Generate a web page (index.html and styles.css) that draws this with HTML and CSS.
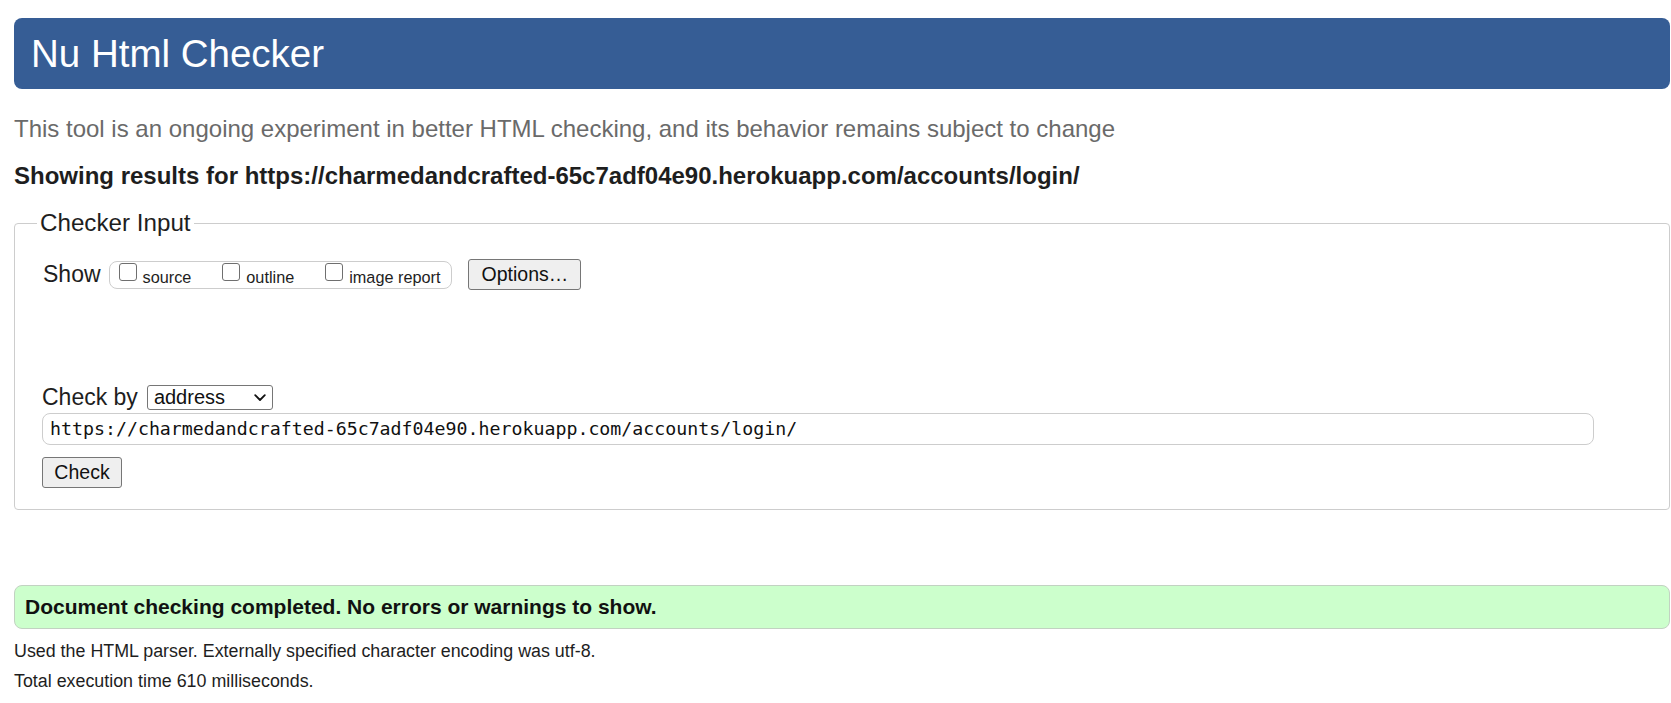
FILE: index.html
```html
<!DOCTYPE html>
<html lang="en">
<head>
<meta charset="utf-8">
<title>Nu Html Checker</title>
<link rel="stylesheet" href="styles.css">
</head>
<body>
<div class="page">
  <header class="banner"><h1 class="banner-title">Nu Html Checker</h1></header>
  <p class="tagline">This tool is an ongoing experiment in better HTML checking, and its behavior remains subject to change</p>
  <p class="results">Showing results for https://charmedandcrafted-65c7adf04e90.herokuapp.com/accounts/login/</p>
  <fieldset class="input">
    <legend class="input-legend">Checker Input</legend>
    <div class="show-row">
      <span class="row-label show-label">Show</span>
      <span class="group">
        <label class="opt"><span class="cb"></span><span class="opt-text">source</span></label>
        <label class="opt"><span class="cb"></span><span class="opt-text">outline</span></label>
        <label class="opt"><span class="cb"></span><span class="opt-text">image report</span></label>
      </span>
      <span class="btn btn-options">Options…</span>
    </div>
    <div class="checkby-row">
      <span class="row-label checkby-label">Check by</span>
      <span class="select">
        <span class="select-text">address</span>
        <svg class="chev" width="12" height="8" viewBox="0 0 12 8"><polyline points="1.2,1.2 6,6 10.8,1.2" fill="none" stroke="#111" stroke-width="1.8" stroke-linecap="round" stroke-linejoin="round"/></svg>
      </span>
    </div>
    <div class="url">https://charmedandcrafted-65c7adf04e90.herokuapp.com/accounts/login/</div>
    <div class="check-row"><span class="btn btn-check">Check</span></div>
  </fieldset>
  <div class="success">Document checking completed. No errors or warnings to show.</div>
  <p class="info info-first">Used the HTML parser. Externally specified character encoding was utf-8.</p>
  <p class="info">Total execution time 610 milliseconds.</p>
</div>
</body>
</html>
```
FILE: styles.css
```css
* { box-sizing: border-box; }
html, body { margin: 0; padding: 0; background: #fff; }
body {
  font-family: Arial, "Liberation Sans", sans-serif;
  color: #222;
}
.page { padding: 18px 1px 0 14px; }

.banner {
  height: 71px;
  background: #365d95;
  border-radius: 8px;
  padding-left: 17px;
}
.banner-title {
  margin: 0;
  font-size: 38.5px;
  font-weight: normal;
  line-height: 71px;
  color: #fff;
}

.tagline {
  margin: 27px 0 0;
  font-size: 24px;
  line-height: 26px;
  color: #6a6a6a;
}
.results {
  margin: 20px 0 0;
  font-size: 24px;
  line-height: 28px;
  font-weight: bold;
  color: #1e1e1e;
}

.input {
  margin: 19px 0 0;
  min-width: 0;
  border: 1px solid #cdcdcd;
  border-radius: 4px;
  padding: 22px 20px 21px 27px;
}
.input-legend {
  font-size: 24.2px;
  line-height: 28px;
  padding: 0 3px;
  margin-left: -5px;
  color: #1e1e1e;
}

.row-label { font-size: 23px; color: #1e1e1e; }

.show-row {
  display: flex;
  align-items: center;
  height: 31px;
}
.show-label { margin-left: 1px; margin-right: 8px; }
.group {
  display: flex;
  align-items: flex-start;
  gap: 31px;
  height: 28px;
  border: 1px solid #cdcdcd;
  border-radius: 8px;
  padding: 1px 11px 0 9px;
  margin-right: 16px;
}
.opt {
  display: flex;
  align-items: flex-start;
  font-size: 16.25px;
  line-height: 20px;
  color: #1e1e1e;
}
.cb {
  width: 18px;
  height: 18px;
  border: 1px solid #6f6f6f;
  border-radius: 3px;
  margin-right: 6px;
  background: #fff;
}
.opt-text { padding-top: 4.5px; }

.btn {
  display: inline-flex;
  align-items: center;
  justify-content: center;
  font-size: 19.5px;
  color: #111;
  background: #efefef;
  border: 1px solid #767676;
  border-radius: 3px;
  padding: 0 11px;
}
.btn-options { height: 31px; width: 113px; }
.btn-check { height: 31px; width: 80px; }

.checkby-row {
  display: flex;
  align-items: center;
  height: 25px;
  margin-top: 95px;
}
.checkby-label { margin-right: 9px; }
.select {
  display: flex;
  align-items: center;
  justify-content: space-between;
  width: 126px;
  height: 25px;
  border: 1px solid #767676;
  border-radius: 3px;
  padding: 0 6px 0 6px;
  background: #fff;
}
.select-text { font-size: 20px; color: #111; }
.chev { display: block; }

.url {
  margin-top: 3px;
  height: 32px;
  width: 1552px;
  border: 1px solid #cdcdcd;
  border-radius: 8px;
  padding-left: 7px;
  font-family: "DejaVu Sans Mono", "Liberation Mono", monospace;
  font-size: 18.25px;
  line-height: 30px;
  color: #111;
}

.check-row { margin-top: 12px; display: flex; }

.success {
  margin-top: 75px;
  height: 44px;
  background: #ccffcc;
  border: 1px solid #c2d2c2;
  border-radius: 8px;
  padding-left: 10px;
  font-size: 21px;
  font-weight: bold;
  line-height: 42px;
  color: #111;
}

.info {
  margin: 0;
  font-size: 17.85px;
  line-height: 30px;
  color: #1e1e1e;
}
.info-first { margin-top: 7px; }
```
